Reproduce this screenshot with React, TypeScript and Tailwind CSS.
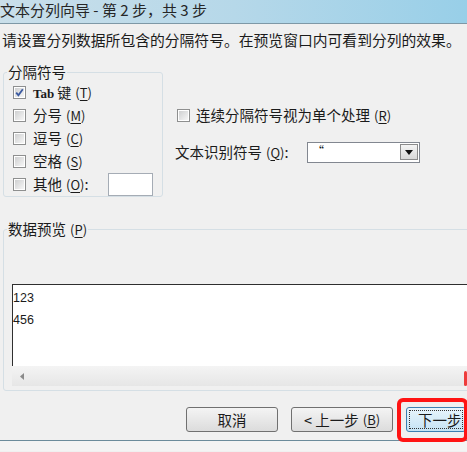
import React from 'react';

function Box({ checked }: { checked?: boolean }) {
  return (
    <span className="relative flex h-[13px] w-[13px] shrink-0 items-center justify-center border border-[#8e8f8f] bg-white">
      <span className="h-[9px] w-[9px] bg-linear-to-br from-[#cfd0d1] to-[#f6f6f6]" />
      {checked && (
        <svg className="absolute left-0 top-0" width="11" height="11" viewBox="0 0 11 11">
          <path d="M2.2 5.6 L4.4 8.2 L8.8 2.2" fill="none" stroke="#3b5aa0" strokeWidth="1.8" />
        </svg>
      )}
    </span>
  );
}

function Key({ k }: { k: string }) {
  return (
    <span className="ml-[4px] text-[13px]">
      (<span className="underline underline-offset-2">{k}</span>)
    </span>
  );
}

const delimiters = [
  { label: '分号', key: 'M' },
  { label: '逗号', key: 'C' },
  { label: '空格', key: 'S' },
];

export default function App() {
  return (
    <div className="relative h-[452px] w-[467px] overflow-hidden bg-[#f0f0f0] text-[#1b1b1b] font-['Noto_Sans_CJK_SC','Liberation_Sans',sans-serif]">
      {/* title bar */}
      <div className="h-[24px] border-b border-[#7e98a6] bg-linear-to-r from-[#c9dfea] via-[#b6d8e9] to-[#98cfe8]">
        <span className="block text-[15px] leading-[19px] text-[#262626]">文本分列向导 - 第 2 步，共 3 步</span>
      </div>

      <p className="mt-[7px] pl-[2px] text-[14.8px] leading-[18px] whitespace-nowrap">
        请设置分列数据所包含的分隔符号。在预览窗口内可看到分列的效果。
      </p>

      <div className="mt-[14px] flex">
        <fieldset className="ml-[3px] w-[160px] rounded-[3px] border border-[#d5dfe5]">
          <legend className="ml-[3px] px-[1px] text-[14.5px] leading-[18px]">分隔符号</legend>
          <div className="pl-[9px]">
            <div className="flex h-[23px] items-center gap-[7px]">
              <Box checked />
              <span className="text-[14px] leading-none">
                <span className="font-['Liberation_Serif',serif] font-bold text-[13px]">Tab</span> 键
                <Key k="T" />
              </span>
            </div>
            {delimiters.map((d) => (
              <div key={d.key} className="flex h-[23px] items-center gap-[7px]">
                <Box />
                <span className="text-[14.5px] leading-none">
                  {d.label}
                  <Key k={d.key} />
                </span>
              </div>
            ))}
            <div className="flex h-[23px] items-center gap-[7px]">
              <Box />
              <span className="w-[68px] text-[14.5px] leading-none">
                其他
                <Key k="O" />:
              </span>
              <span className="h-[23px] w-[45px] border border-[#a5acb5] bg-white" />
            </div>
          </div>
        </fieldset>

        <div className="ml-[12px] pt-[41px]">
          <div className="flex h-[22px] items-center gap-[6px] pl-[2px]">
            <Box />
            <span className="text-[14.5px] leading-none">
              连续分隔符号视为单个处理
              <Key k="R" />
            </span>
          </div>
          <div className="mt-[15px] flex h-[22px] items-center">
            <span className="w-[132px] text-[14.5px] leading-none">
              文本识别符号
              <Key k="Q" />:
            </span>
            <div className="flex h-[21px] w-[113px] items-center border border-[#828790] bg-white">
              <span className="flex-1 self-start pl-[4px] pt-[2px] text-[12px] leading-none">“</span>
              <span className="mr-[1px] flex h-[16px] w-[18px] items-center justify-center border border-[#8b8b8b] bg-linear-to-b from-[#f4f4f4] to-[#d8d8d8]">
                <svg width="8" height="5" viewBox="0 0 8 5">
                  <path d="M0 0 H8 L4 5 Z" fill="#111" />
                </svg>
              </span>
            </div>
          </div>
        </div>
      </div>

      <fieldset className="ml-[3px] mt-[23px] w-[480px] rounded-[3px] border border-[#d5dfe5]">
        <legend className="ml-[3px] px-[1px] text-[14.5px] leading-[18px]">
          数据预览
          <Key k="P" />
        </legend>
        <div className="pl-[8px] pt-[45px] pb-[4px]">
          <div className="h-[82px] border-l border-t border-[#2f2f2f] bg-white pt-[2px] font-['Liberation_Sans',sans-serif] text-[12.5px] leading-[22px]">
            <div>123</div>
            <div>456</div>
          </div>
          <div className="flex h-[20px] items-center bg-linear-to-b from-[#f4f4f4] to-[#e6e6e6] pl-[8px]">
            <svg width="4" height="7" viewBox="0 0 4 7">
              <path d="M4 0 V7 L0 3.5 Z" fill="#8a8a8a" />
            </svg>
          </div>
        </div>
      </fieldset>

      <div className="mt-[16px] flex gap-[13px] pl-[186px] text-[14.5px]">
        <button className="flex h-[25px] w-[92px] shrink-0 items-center justify-center rounded-[3px] border border-[#707070] bg-linear-to-b from-[#f4f4f4] to-[#dcdcdc]">
          取消
        </button>
        <button className="flex h-[25px] w-[102px] shrink-0 items-center justify-center rounded-[3px] border border-[#707070] bg-linear-to-b from-[#f4f4f4] to-[#dcdcdc]">
          &lt; 上一步
          <Key k="B" />
        </button>
        <button className="flex h-[25px] w-[60px] shrink-0 items-center overflow-hidden rounded-[3px] border border-[#3c7fb1] bg-linear-to-b from-[#e9f5fc] to-[#c5e3f4] p-[2px]">
          <span className="flex h-full w-full items-center whitespace-nowrap border border-dotted border-[#333] pl-[8px]">
            下一步
          </span>
        </button>
      </div>

      <div className="mt-[8px] h-[11px] border-t border-[#6c8c9c] bg-[#f4f4f4]" />

      {/* red highlights drawn over the dialog */}
      <div className="absolute left-[397px] top-[398px] h-[44px] w-[71px] rounded-[6px] border-[4px] border-[#ff1414]" />
      <div className="absolute left-[464px] top-[371px] h-[15px] w-[3px] rounded-sm bg-[#ee3b3b]" />
    </div>
  );
}
